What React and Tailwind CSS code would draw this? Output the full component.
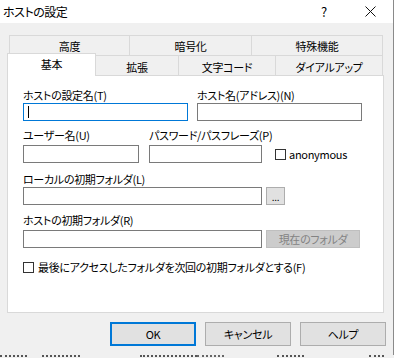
import React from 'react';

const Field = ({ className, focused }) => (
  <div
    className={`h-[18px] bg-white border ${focused ? 'border-[#0078d7]' : 'border-[#7a7a7a]'} ${className}`}
  >
    {focused && <div className="w-[1px] h-[12px] bg-black mt-[2px] ml-[4px]" />}
  </div>
);

const CheckBox = () => <div className="w-[11px] h-[11px] border border-[#333] bg-white shrink-0" />;

const Label = ({ children, className = '' }) => (
  <div className={`h-[15px] leading-[15px] whitespace-nowrap ${className}`}>{children}</div>
);

const TopTab = ({ children, className }) => (
  <div className={`h-[20px] border-t border-l border-[#d9d9d9] flex items-center justify-center leading-[16px] ${className}`}>
    {children}
  </div>
);

const LowTab = ({ children, className }) => (
  <div className={`h-[20px] border-t border-l border-[#d9d9d9] pt-[3px] text-center leading-[16px] ${className}`}>
    {children}
  </div>
);

const Button = ({ children, primary }) => (
  <div
    className={`w-[86px] h-[24px] bg-[#e1e1e1] flex items-center justify-center leading-[16px] ${
      primary ? 'border-2 border-[#0078d7]' : 'border border-[#adadad]'
    }`}
  >
    {children}
  </div>
);

export default function App() {
  return (
    <div className="w-[394px] h-[358px] bg-[#f0f0f0] overflow-hidden text-[11px] tracking-[-0.3px] text-black font-['Noto_Sans_CJK_JP','Noto_Sans',sans-serif] [font-feature-settings:'palt']">
      <div className="h-[355px] border-r border-[#8a8a8a] flex flex-col">
        {/* title bar */}
        <div className="h-[23px] bg-white flex items-center shrink-0">
          <div className="pl-[3px] leading-[16px] text-[12px] tracking-[-0.5px]">ホストの設定</div>
          <div className="ml-auto flex h-full">
            <div className="w-[46px] flex items-center justify-center text-[13px] leading-[16px]">?</div>
            <div className="w-[46px] flex items-center justify-center">
              <svg width="11" height="11" viewBox="0 0 11 11">
                <path d="M0.5 0.5 L10.5 10.5 M10.5 0.5 L0.5 10.5" stroke="#111" strokeWidth="1" fill="none" />
              </svg>
            </div>
          </div>
        </div>

        {/* tabs */}
        <div className="pt-[12px]">
          <div className="flex ml-[9px]">
            <TopTab className="w-[120px]">高度</TopTab>
            <TopTab className="w-[122px]">暗号化</TopTab>
            <TopTab className="w-[132px] border-r">特殊機能</TopTab>
          </div>
          <div className="flex ml-[7px] h-[20px]">
            <div className="relative z-10 w-[89px] h-[23px] -mt-[2px] bg-white border-t border-l border-r border-[#d9d9d9] pt-[2px] text-center leading-[16px]">
              基本
            </div>
            <LowTab className="w-[82px] border-l-0">拡張</LowTab>
            <LowTab className="w-[97px]">文字コード</LowTab>
            <LowTab className="w-[108px] border-r">ダイアルアップ</LowTab>
          </div>

          {/* panel */}
          <div className="ml-[7px] w-[377px] h-[238px] border border-[#d9d9d9] bg-white pl-[15px] pt-[12px] flex flex-col">
            <div className="flex gap-[9px]">
              <div className="w-[165px]">
                <Label>ホストの設定名(T)</Label>
                <Field className="w-[165px]" focused />
              </div>
              <div className="w-[165px]">
                <Label>ホスト名(アドレス)(N)</Label>
                <Field className="w-[165px]" />
              </div>
            </div>

            <div className="flex mt-[7px]">
              <div className="w-[116px]">
                <Label className="mb-[2px]">ユーザー名(U)</Label>
                <Field className="w-[116px]" />
              </div>
              <div className="w-[113px] ml-[10px]">
                <Label className="mb-[2px]">パスワード/パスフレーズ(P)</Label>
                <Field className="w-[113px]" />
              </div>
              <div className="self-end h-[18px] ml-[13px] flex items-center gap-[3px]">
                <CheckBox />
                <span className="leading-[16px]">anonymous</span>
              </div>
            </div>

            <Label className="mt-[9px]">ローカルの初期フォルダ(L)</Label>
            <div className="flex gap-[4px]">
              <Field className="w-[239px]" />
              <div className="w-[19px] h-[18px] bg-[#e1e1e1] border border-[#adadad] flex items-end justify-center text-[10px] leading-[12px] pb-[1px]">
                ...
              </div>
            </div>

            <Label className="mt-[8px] mb-[2px]">ホストの初期フォルダ(R)</Label>
            <div className="flex gap-[4px]">
              <Field className="w-[239px]" />
              <div className="w-[94px] h-[18px] bg-[#cccccc] border border-[#bfbfbf] flex items-center justify-center text-[#838383] leading-[16px]">
                現在のフォルダ
              </div>
            </div>

            <div className="mt-[12px] h-[15px] flex items-center gap-[4px]">
              <CheckBox />
              <span className="leading-[15px] whitespace-nowrap">
                最後にアクセスしたフォルダを次回の初期フォルダとする(F)
              </span>
            </div>
          </div>
        </div>

        {/* buttons */}
        <div className="flex gap-[9px] ml-[110px] mt-[9px]">
          <Button primary>OK</Button>
          <Button>キャンセル</Button>
          <Button>ヘルプ</Button>
        </div>
      </div>

      {/* window behind, peeking under the dialog */}
      <div className="h-[3px] flex">
        <div className="w-[27px] border-t-2 border-dotted border-[#555]" />
        <div className="w-[15px]" />
        <div className="w-[38px] border-t-2 border-dotted border-[#555]" />
        <div className="w-[60px]" />
        <div className="w-[57px] border-t-2 border-dotted border-[#555]" />
        <div className="w-[27px] border-t-2 border-dotted border-[#666]" />
        <div className="w-[53px]" />
        <div className="w-[27px] border-t-2 border-dotted border-[#555]" />
        <div className="w-[65px]" />
        <div className="w-[15px] border-t-2 border-dotted border-[#555]" />
      </div>
    </div>
  );
}
